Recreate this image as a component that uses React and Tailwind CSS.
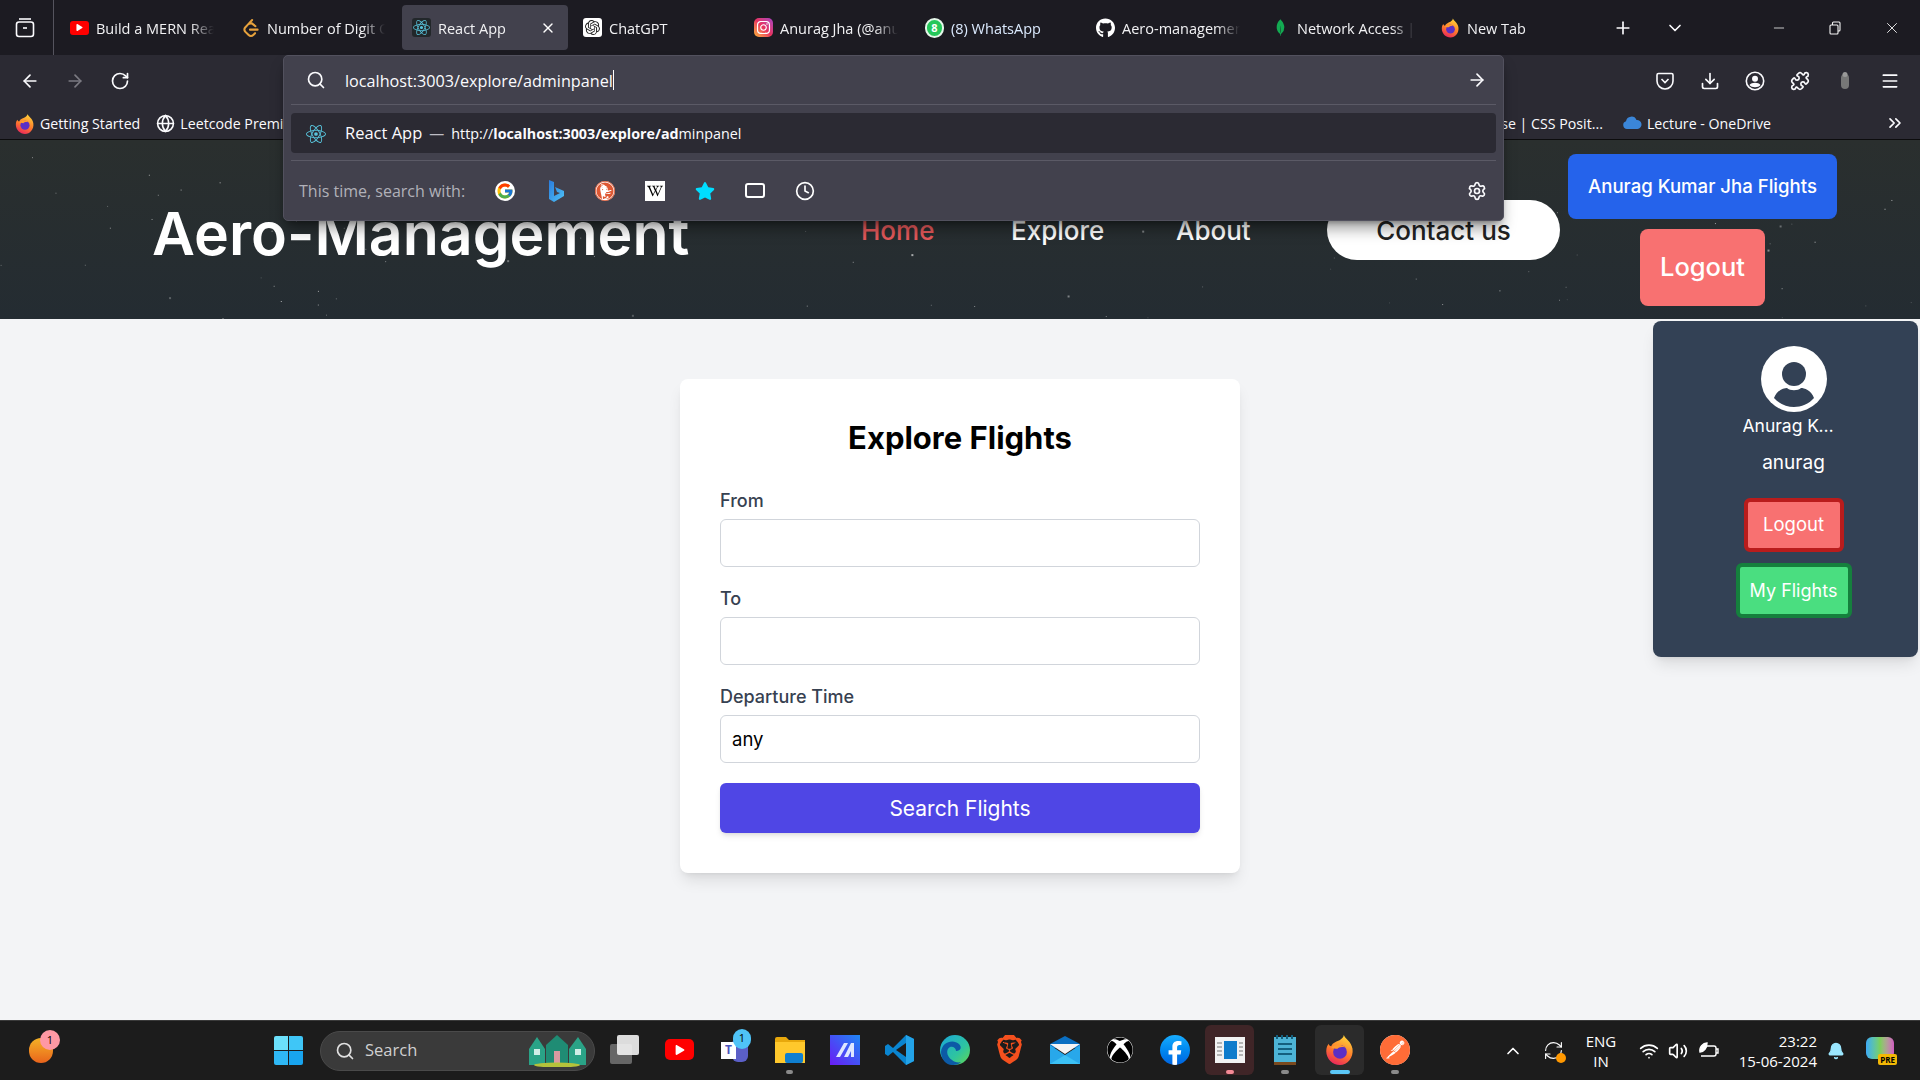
import { ArrowLeft, ArrowRight, RotateCw, Search, X, Plus, ChevronDown, Minus, Download, Menu, ChevronsRight, Globe, ChevronUp, Wifi, Volume2, Bell, RefreshCw, Settings, Clock, Puzzle } from 'lucide-react';
import { FaGithub, FaInstagram, FaStar, FaWikipediaW, FaXbox, FaFacebookF, FaPlay } from 'react-icons/fa';
import { FcGoogle } from 'react-icons/fc';
import { SiReact, SiOpenai, SiMongodb, SiLeetcode, SiDuckduckgo, SiBrave, SiPostman } from 'react-icons/si';

const ui = "font-['Open_Sans','Noto_Sans',sans-serif]";
const app = "font-['Inter','Liberation_Sans',sans-serif]";

function Firefox({ size = 20 }) {
    return (
        <svg width={size} height={size} viewBox="0 0 24 24">
            <defs>
                <linearGradient id="ffx" x1="0.7" y1="0" x2="0.3" y2="1">
                    <stop offset="0" stopColor="#ffd53a" />
                    <stop offset="0.55" stopColor="#ff7a2b" />
                    <stop offset="1" stopColor="#e8245e" />
                </linearGradient>
            </defs>
            <path d="M15 0c1 3 6 5 7 11 1 7-4 13-10 13C6 24 1 19 1 13c0-3 1-5 2-6 0 1 1 2 2 2 1-3 5-4 7-5 1-1 3-2 3-4z" fill="url(#ffx)" />
            <circle cx="12" cy="13.5" r="5.5" fill="#5b2fc4" />
            <path d="M5 10c3-3 9-3 11 0-3-1-5 0-6 1-2 0-3 0-5-1z" fill="#ff9a2e" />
        </svg>
    );
}

function Tab({ icon, title, active }) {
    return (
        <div className={`flex h-[45px] w-[166px] shrink-0 items-center gap-[7px] rounded-[4px] pl-[10px] pr-[12px] ${active ? 'bg-[#42414d]' : ''}`}>
            <span className="flex w-[19px] shrink-0 justify-center">{icon}</span>
            <span className="min-w-0 flex-1 overflow-hidden whitespace-nowrap pt-[2px] text-[14.5px] text-[#f2f2f4] [mask-image:linear-gradient(to_right,black_80%,transparent)]">{title}</span>
            {active && <X size={16} className="text-white" />}
        </div>
    );
}

function TabStrip() {
    return (
        <div className="flex h-[55px] shrink-0 items-center bg-[#1c1b22]">
            <div className="flex h-full w-[54px] shrink-0 items-center justify-center border-r border-[#55545e] pr-[4px]">
                <svg width="20" height="20" viewBox="0 0 20 20" fill="none" stroke="#fbfbfe" strokeWidth="1.6">
                    <rect x="1.5" y="4" width="17" height="14.5" rx="2.5" />
                    <path d="M4 1h12" />
                    <path d="M8 10h4" />
                </svg>
            </div>
            <div className="ml-[6px] flex gap-[5px]">
                <Tab title="Build a MERN React App" icon={<span className="flex h-[14px] w-[19px] items-center justify-center rounded-[3px] bg-[#ff0000]"><FaPlay size={7} className="text-white" /></span>} />
                <Tab title="Number of Digit One" icon={<SiLeetcode size={18} className="text-[#e7a23c]" />} />
                <Tab active title="React App" icon={<span className="flex h-[19px] w-[19px] items-center justify-center rounded-[3px] bg-[#22272a]"><SiReact size={17} className="text-[#58c4dc]" /></span>} />
                <Tab title="ChatGPT" icon={<span className="flex h-[19px] w-[19px] items-center justify-center rounded-[3px] bg-white"><SiOpenai size={15} className="text-[#222]" /></span>} />
                <Tab title="Anurag Jha (@anurag" icon={<span className="flex h-[19px] w-[19px] items-center justify-center rounded-[5px] bg-linear-to-tr from-[#fdb22b] via-[#e8305e] to-[#a83bc4]"><FaInstagram size={15} className="text-white" /></span>} />
                <Tab title={<span className="text-[#dbeafe]">(8) WhatsApp</span>} icon={<span className="flex h-[20px] w-[20px] items-center justify-center rounded-full border-2 border-[#e5f7ea] bg-[#25c75a] text-[11px] font-bold leading-none text-white">8</span>} />
                <Tab title="Aero-management-sys" icon={<FaGithub size={20} className="text-white" />} />
                <div className="ml-[4px]"><Tab title="Network Access | Cloud" icon={<SiMongodb size={17} className="text-[#13aa52]" />} /></div>
                <div className="-ml-[1px]"><Tab title="New Tab" icon={<Firefox />} /></div>
            </div>
            <div className="ml-[16px] flex items-center gap-[32px]">
                <Plus size={20} className="text-[#fbfbfe]" />
                <ChevronDown size={20} className="text-[#fbfbfe]" />
            </div>
            <div className="ml-auto flex items-center gap-[40px] pr-[19px] text-[#f4f4f4]">
                <Minus size={16} strokeWidth={1.2} />
                <svg width="16" height="16" viewBox="0 0 16 16" fill="none" stroke="currentColor" strokeWidth="1.1"><rect x="3" y="5" width="8" height="9" rx="1" /><path d="M5.5 5V3a1 1 0 0 1 1-1H12a1 1 0 0 1 1 1v7a1 1 0 0 1-1 1h-1" /></svg>
                <X size={18} strokeWidth={1.2} />
            </div>
        </div>
    );
}

function Toolbar() {
    return (
        <div className="h-[85px] shrink-0 border-b border-[#0c0c0d] bg-[#2b2a33]">
            <div className="flex h-[48px] items-center pl-[20px] pr-[20px] pt-[3px]">
                <ArrowLeft size={20} className="text-[#fbfbfe]" />
                <ArrowRight size={20} className="ml-[25px] text-[#7b7a82]" />
                <RotateCw size={20} className="ml-[25px] text-[#fbfbfe]" />
                <div className="ml-auto flex items-center gap-[25px] text-[#fbfbfe]">
                    <svg width="20" height="20" viewBox="0 0 20 20" fill="none" stroke="currentColor" strokeWidth="1.6"><path d="M3.5 2.5h13a1.5 1.5 0 0 1 1.5 1.5v6a8 8 0 0 1-16 0V4a1.5 1.5 0 0 1 1.5-1.5z" /><path d="M6.5 8l3.5 3.5L13.5 8" /></svg>
                    <Download size={20} />
                    <svg width="20" height="20" viewBox="0 0 20 20"><circle cx="10" cy="10" r="8.7" fill="none" stroke="currentColor" strokeWidth="1.6" /><circle cx="10" cy="7.7" r="3" fill="currentColor" /><path d="M4.5 14c2-3 9-3 11 0-2 3-9 3-11 0z" fill="currentColor" /></svg>
                    <Puzzle size={20} />
                    <svg width="20" height="20" viewBox="0 0 20 20"><rect x="6" y="3" width="8" height="15" rx="4" fill="#777" /><circle cx="10" cy="3.5" r="2.5" fill="#999" /></svg>
                    <Menu size={20} />
                </div>
            </div>
            <div className={`flex h-[36px] items-center pl-[15px] pr-[15px] pt-[5px] text-[14.2px] text-[#fbfbfe] ${ui}`}>
                <Firefox />
                <span className="ml-[5px]">Getting Started</span>
                <Globe size={19} className="ml-[16px]" />
                <span className="ml-[5px]">Leetcode Premium</span>
                <div className="ml-auto flex items-center">
                    <span>Flexbox Course | CSS Posit...</span>
                    <svg width="20" height="14" viewBox="0 0 20 14" className="ml-[19px]"><path d="M5 13a4 4 0 0 1-1-7.8A5.5 5.5 0 0 1 14.5 4 4.5 4.5 0 0 1 15.500 13z" fill="#3b86d8" /></svg>
                    <span className="ml-[5px]">Lecture - OneDrive</span>
                    <ChevronsRight size={20} className="ml-[114px]" />
                </div>
            </div>
        </div>
    );
}

function UrlPanel() {
    return (
        <div className={`absolute left-[283px] top-[55px] h-[166px] w-[1221px] rounded-[5px] border border-[#52515e] bg-[#42414d] px-[7px] shadow-lg shadow-black/40 ${ui}`}>
            <div className="flex h-[49px] items-center border-b border-[#5b5a66] pl-[15px] pr-[9px] text-[16.2px] text-[#fbfbfe]">
                <Search size={20} />
                <span className="ml-[19px] pt-[2px]">localhost:3003/explore/adminpanel</span>
                <span className="h-[20px] w-px bg-white" />
                <ArrowRight size={20} className="ml-auto" />
            </div>
            <div className="mt-[8px] flex h-[40px] items-center rounded-[4px] bg-[#2b2a33] pl-[15px] pt-[1px] text-[#fbfbfe]">
                <SiReact size={20} className="text-[#58c4dc]" />
                <span className="ml-[19px] text-[16.5px]">React App</span>
                <span className="ml-[7px] text-[15px] text-[#bdbcc4]">—</span>
                <span className="ml-[7px] text-[14.3px]">http://<b>localhost:3003/explore/ad</b>minpanel</span>
            </div>
            <div className="mt-[7px] flex h-[60px] items-center border-t border-[#5b5a66] pl-[8px] pr-[9px] text-[16px] text-[#b1b1b9]">
                <span className="w-[196px] whitespace-nowrap">This time, search with:</span>
                <div className="flex items-center gap-[30px] text-white">
                    <span className="flex h-[20px] w-[20px] items-center justify-center rounded-full bg-white"><FcGoogle size={18} /></span>
                    <svg width="20" height="24" viewBox="0 0 20 24"><defs><linearGradient id="bng" x1="0" y1="0" x2="1" y2="1"><stop offset="0" stopColor="#2a7bdc" /><stop offset="1" stopColor="#4fc3f7" /></linearGradient></defs><path d="M4 1l5 2v14l6-3-3-1-2-5 9 4v5L9 23l-5-3z" fill="url(#bng)" /></svg>
                    <span className="flex h-[20px] w-[20px] items-center justify-center rounded-full bg-white"><SiDuckduckgo size={20} className="text-[#de5833]" /></span>
                    <span className="flex h-[20px] w-[20px] items-center justify-center bg-white"><FaWikipediaW size={16} className="text-black" /></span>
                    <FaStar size={20} className="text-[#00ddff]" />
                    <span className="h-[15px] w-[20px] rounded-[3px] border-2 border-white" />
                    <Clock size={20} />
                </div>
                <Settings size={20} className="ml-auto text-[#fbfbfe]" />
            </div>
        </div>
    );
}

// seeded so the stars land on the same spots every run
const rnd = (n) => {
    const v = Math.sin(n * 12.9898) * 43758.5453;
    return v - Math.floor(v);
};
const stars = Array.from({ length: 110 }, (_, i) => ({
    x: rnd(i + 1) * 1920,
    y: rnd(i + 501) * 179,
    s: rnd(i + 901) > 0.85 ? 2 : 1,
    o: 0.15 + rnd(i + 1301) * 0.5,
}));

function Header() {
    return (
        <header className={`relative flex h-[179px] shrink-0 items-center overflow-hidden bg-linear-to-b from-[#2a2f2e] to-[#242c32] pt-[1px] ${app}`}>
            <svg className="absolute inset-0" width="1920" height="179">
                {stars.map((s, i) => <rect key={i} x={s.x} y={s.y} width={s.s} height={s.s} fill="#fff" opacity={s.o} />)}
            </svg>
            <h1 className="relative ml-[152px] mt-[7px] w-[709px] whitespace-nowrap text-[59px] font-semibold leading-none text-white">Aero-Management</h1>
            <nav className="relative flex items-center text-[26px] font-medium text-white">
                <a className="w-[150px] text-[#e5595b]">Home</a>
                <a className="w-[165px]">Explore</a>
                <a className="w-[151px]">About</a>
                <a className="flex h-[60px] w-[233px] items-center justify-center rounded-full bg-white text-[#222]">Contact us</a>
            </nav>
            <div className="relative ml-[8px] flex w-[269px] flex-col items-center gap-[10px]">
                <button className="h-[65px] w-[269px] rounded-lg bg-[#2563eb] text-[18.6px] font-medium text-white">Anurag Kumar Jha Flights</button>
                <button className="h-[77px] w-[125px] rounded-lg bg-[#f87171] text-[25.5px] font-medium text-white">Logout</button>
            </div>
        </header>
    );
}

function Field({ label, value, last }) {
    return (
        <div className={last ? 'mb-[20px]' : 'mb-[18px]'}>
            <label className="mb-[4px] block text-[18px] font-medium leading-[28px] text-[#374151]">{label}</label>
            <input readOnly value={value || ''} className="block h-[48px] w-full rounded-md border border-[#d1d5db] bg-white px-[11px] text-[18.5px] text-black" />
        </div>
    );
}

function SidePanel() {
    return (
        <aside className="absolute right-[2px] top-[2px] flex h-[336px] w-[265px] flex-col items-center rounded-lg bg-[#334155] pl-[16px] pt-[25px] text-white shadow-lg">
            <svg width="66" height="66" viewBox="0 0 66 66" className="shrink-0">
                <circle cx="33" cy="33" r="33" fill="#fff" />
                <circle cx="33" cy="28" r="12" fill="#334155" />
                <path d="M13 52c3-8 10-10 13-10 3 3 11 3 14 0 3 0 10 2 13 10-5 6-13 9-20 9s-15-3-20-9z" fill="#334155" />
            </svg>
            <div className="mt-[1px] w-[92px] -translate-x-[5px] truncate text-[17.5px] leading-[26px]">Anurag Kumar Jha</div>
            <div className="mt-[11px] text-[19px] leading-[26px]">anurag</div>
            <button className="mt-[22px] h-[54px] w-[100px] rounded-md border-[4px] border-[#b91c1c] bg-[#f87171] text-[18.5px]">Logout</button>
            <button className="mt-[11px] h-[55px] w-[116px] rounded-md border-[4px] border-[#15803d] bg-[#4ade80] text-[18px]">My Flights</button>
        </aside>
    );
}

function Main() {
    return (
        <main className={`relative flex flex-1 justify-center bg-[#f3f4f6] pt-[60px] ${app}`}>
            <div className="h-[494px] w-[560px] rounded-lg bg-white p-[40px] shadow-lg">
                <h2 className="mb-[32px] pt-[1px] text-center text-[31px] font-bold leading-[36px] text-black">Explore Flights</h2>
                <div className="-mt-[1px]">
                    <Field label="From" />
                    <Field label="To" />
                    <Field label="Departure Time" value="any" last />
                </div>
                <button className="h-[50px] w-full rounded-md bg-[#4f46e5] pt-[1px] text-[21px] text-white shadow-md">Search Flights</button>
            </div>
            <SidePanel />
        </main>
    );
}

function Slot({ children, dot, tile }) {
    return (
        <div className="relative flex h-[50px] w-[55px] shrink-0 items-center justify-center">
            {tile && <span className={`absolute inset-y-0 inset-x-[3px] rounded-md ${tile}`} />}
            <span className="relative flex items-center justify-center">{children}</span>
            {dot && <span className={`absolute bottom-[1px] h-[4px] rounded-full ${dot}`} />}
        </div>
    );
}

function Taskbar() {
    return (
        <div className={`flex h-[60px] shrink-0 items-center border-t border-[#3a3a3a] bg-[#1c1c1c] text-white ${ui}`}>
            <div className="relative ml-[29px] h-[25px] w-[25px] shrink-0">
                <span className="absolute bottom-0 left-0 h-[25px] w-[24px] rounded-full bg-linear-to-b from-[#f3b126] to-[#e8631c]" />
                <span className="absolute -right-[6px] -top-[8px] flex h-[20px] w-[20px] items-center justify-center rounded-full bg-[#ff98a4] text-[11px] text-black">1</span>
            </div>
            <div className="ml-[220px] grid h-[29px] w-[29px] shrink-0 grid-cols-2 gap-[1px]">
                <span className="rounded-tl-[2px] bg-[#6ce0fb]" /><span className="rounded-tr-[2px] bg-[#3fc6f7]" />
                <span className="rounded-bl-[2px] bg-[#2fb8f5]" /><span className="rounded-br-[2px] bg-[#18a4ee]" />
            </div>
            <div className="ml-[17px] flex h-[40px] w-[275px] shrink-0 items-center rounded-full border border-[#4a4a4a] bg-[#3a3a3a] pl-[14px] pr-[7px] text-[16.5px] text-[#d0d0d0]">
                <Search size={20} className="text-[#e0e0e0]" />
                <span className="ml-[10px]">Search</span>
                <svg width="59" height="32" viewBox="0 0 59 32" className="ml-auto">
                    <path d="M1 30V14l8-12 8 12v16z" fill="#2aa387" />
                    <path d="M41 30V14l9-12 8 12v16z" fill="#2aa387" />
                    <path d="M18 30V10L29 0l11 10v20z" fill="#1f8c74" />
                    <rect x="26" y="16" width="6" height="14" fill="#d99aa0" />
                    <rect x="6" y="14" width="6" height="6" fill="#cfeee7" /><rect x="47" y="14" width="6" height="6" fill="#cfeee7" />
                    <ellipse cx="29" cy="30" rx="23" ry="2.500" fill="#b5c23a" />
                </svg>
            </div>
            <div className="mb-[2px] ml-[2px] flex shrink-0 items-center">
                <Slot>
                    <div className="relative h-[29px] w-[29px]">
                        <span className="absolute bottom-0 left-0 h-[20px] w-[22px] rounded-[2px] bg-[#666]" />
                        <span className="absolute right-0 top-0 h-[20px] w-[22px] rounded-[2px] bg-[#f2f2f2]/90" />
                    </div>
                </Slot>
                <Slot><span className="flex h-[21px] w-[29px] items-center justify-center rounded-[5px] bg-[#ff0000]"><FaPlay size={10} className="text-white" /></span></Slot>
                <Slot>
                    <div className="relative h-[24px] w-[27px]">
                        <span className="absolute right-0 top-0 h-[24px] w-[16px] rounded-[6px] bg-[#5b5fc7]" />
                        <span className="absolute bottom-[3px] left-0 flex h-[17px] w-[15px] items-center justify-center bg-white text-[12px] font-bold text-[#4b53bc]">T</span>
                        <span className="absolute -right-[3px] -top-[9px] flex h-[20px] w-[18px] items-center justify-center rounded-full bg-[#4fc3f7] text-[11px] text-black">1</span>
                    </div>
                </Slot>
                <Slot dot="w-[7px] bg-[#8a8a8a]">
                    <svg width="30" height="26" viewBox="0 0 30 26"><path d="M0 2a2 2 0 0 1 2-2h9l3 3h16v23H0z" fill="#e8a80c" /><rect y="5" width="30" height="21" fill="#ffc82c" /><rect x="10" y="16" width="18" height="10" rx="2" fill="#0f7fd0" /></svg>
                </Slot>
                <Slot>
                    <svg width="30" height="30" viewBox="0 0 30 30"><defs><linearGradient id="mat" x1="0" y1="1" x2="1" y2="0"><stop offset="0" stopColor="#6a1bf5" /><stop offset="1" stopColor="#1e88f5" /></linearGradient></defs><rect width="30" height="30" fill="url(#mat)" /><path d="M6 22L14 8h4l-8 14zM14 22l7-14h3v14h-3v-6l-3 6z" fill="#dfe7ff" /></svg>
                </Slot>
                <Slot>
                    <svg width="29" height="30" viewBox="0 0 29 30"><path d="M21 0l8 4v22l-8 4L8 17l-5 4-3-2V11l3-2 5 4z" fill="#0a85d0" /><path d="M21 8L11 15l10 7z" fill="#1c1c1c" /><path d="M21 0l8 4v22l-8 4z" fill="#23a3e8" /></svg>
                </Slot>
                <Slot>
                    <svg width="30" height="30" viewBox="0 0 30 30"><defs><linearGradient id="edg" x1="0" y1="0" x2="1" y2="1"><stop offset="0" stopColor="#1aa6d8" /><stop offset="0.6" stopColor="#2ec4a0" /><stop offset="1" stopColor="#64d84f" /></linearGradient></defs><circle cx="15" cy="15" r="15" fill="url(#edg)" /><path d="M1 17C2 6 14 4 19 9c3 3 2 7-3 7 0-3-3-5-6-4-4 2-4 9 2 13 2 2 6 3 9 2-3 3-7 3-9 3C6 30 1 24 1 17z" fill="#0c5aa6" /></svg>
                </Slot>
                <Slot><SiBrave size={29} className="text-[#f4501e]" /></Slot>
                <Slot>
                    <svg width="30" height="28" viewBox="0 0 30 28"><path d="M0 8l15-8 15 8v4H0z" fill="#0a6fc2" /><path d="M0 8h30L15 18z" fill="#f4f4f4" /><path d="M0 9l15 10L30 9v19H0z" fill="#28a8ea" /><path d="M0 28l15-9 15 9z" fill="#50d9ff" opacity="0.5" /></svg>
                </Slot>
                <Slot><span className="flex h-[26px] w-[26px] items-center justify-center rounded-full bg-white"><FaXbox size={26} className="text-black" /></span></Slot>
                <Slot><span className="flex h-[30px] w-[30px] items-end justify-center overflow-hidden rounded-full bg-linear-to-b from-[#18acfe] to-[#0163e0]"><FaFacebookF size={24} className="text-white" /></span></Slot>
                <Slot tile="bg-[#3f2527]" dot="w-[8px] bg-[#f48a96]">
                    <svg width="30" height="26" viewBox="0 0 30 26"><rect width="30" height="26" fill="#f2f2f2" /><rect x="9" y="4" width="13" height="18" fill="#0f7ccc" /><path d="M2 6h5M2 10h5M2 14h5M2 18h5M24 6h4M24 10h4M24 14h4M24 18h4" stroke="#777" /></svg>
                </Slot>
                <Slot dot="w-[8px] bg-[#8a8a8a]">
                    <svg width="22" height="30" viewBox="0 0 22 30"><rect y="2" width="22" height="28" fill="#4db4d6" /><rect y="27" width="22" height="3" fill="#7a4a1f" /><path d="M4 9h14M4 14h14M4 19h14" stroke="#14607e" strokeWidth="2" /><path d="M3 0v4M8 0v4M13 0v4M18 0v4" stroke="#14607e" strokeWidth="2" /></svg>
                </Slot>
                <Slot tile="bg-[#2b2b2b]" dot="w-[20px] bg-[#5cc8f8]"><Firefox size={30} /></Slot>
                <Slot dot="w-[8px] bg-[#8a8a8a]"><span className="flex h-[30px] w-[30px] items-center justify-center rounded-full bg-white"><SiPostman size={30} className="text-[#ff6c37]" /></span></Slot>
            </div>
            <div className="ml-[81px] flex shrink-0 items-center">
                <ChevronUp size={20} />
                <div className="relative ml-[20px] h-[22px] w-[22px]">
                    <RefreshCw size={21} strokeWidth={1.3} />
                    <span className="absolute -bottom-[1px] -right-[1px] h-[10px] w-[10px] rounded-full bg-[#ff9800]" />
                </div>
                <div className="ml-[9px] w-[54px] text-center text-[15px] leading-[20px]">ENG<br />IN</div>
                <Wifi size={20} className="ml-[11px]" />
                <Volume2 size={20} className="ml-[9px]" />
                <svg width="22" height="20" viewBox="0 0 22 20" fill="none" stroke="#fff" strokeWidth="1.400" className="ml-[10px]"><path d="M7 5h9a2 2 0 0 1 2 2v6a2 2 0 0 1-2 2H3" /><path d="M18 8h2v4h-2" /><path d="M2 11C1 6 5 2 9 2c0 5-3 9-7 9z" fill="#fff" /></svg>
                <div className="ml-[7px] w-[90px] whitespace-nowrap text-right text-[15px] leading-[20px]">23:22<br />15-06-2024</div>
                <Bell size={18} fill="#9be7ff" className="ml-[10px] text-[#9be7ff]" />
                <div className="relative ml-[21px] h-[28px] w-[30px]">
                    <span className="absolute left-0 top-0 h-[22px] w-[28px] rounded-md bg-linear-to-r from-[#3fa9f5] via-[#7bd05a] to-[#d05ac0]" />
                    <span className="absolute -right-[1px] bottom-0 rounded-[2px] bg-[#f2b705] px-[2px] text-[8px] font-bold leading-[11px] text-black">PRE</span>
                </div>
            </div>
        </div>
    );
}

export default function App() {
    return (
        <div className={`relative flex h-[1080px] w-[1920px] flex-col overflow-hidden ${ui}`}>
            <TabStrip />
            <Toolbar />
            <Header />
            <Main />
            <Taskbar />
            <UrlPanel />
        </div>
    );
}
